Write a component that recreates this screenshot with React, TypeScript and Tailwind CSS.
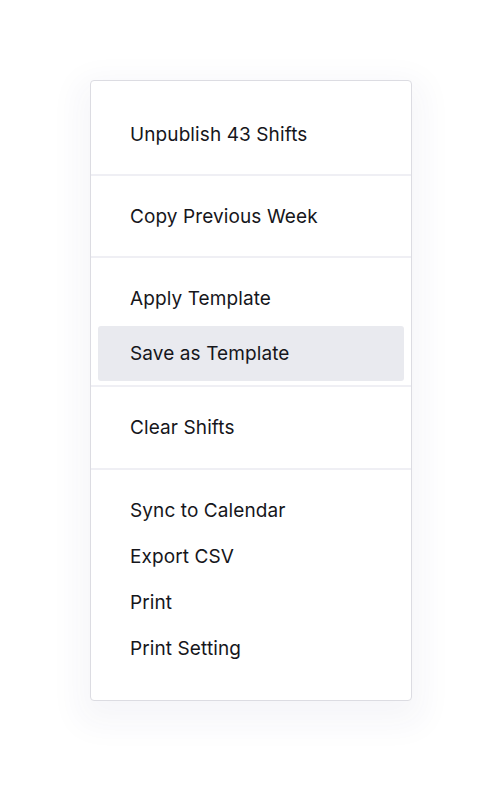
import React from "react";

function Item({ label, active }: { label: string; active?: boolean }) {
  return (
    <div
      className={
        "mx-[7px] flex items-center pl-[32px] rounded-[3px] " +
        (active ? "h-[55px] bg-[#e9eaef] mt-[5px] mb-[4px]" : "h-[46px]")
      }
    >
      <span className="text-[19px] leading-none text-[#16161b] tracking-[0.1px]">{label}</span>
    </div>
  );
}

function Divider() {
  return <div className="h-[2px] bg-[#efeff4]" />;
}

export default function App() {
  return (
    <div
      className="w-[502px] h-[802px] bg-white pt-[80px] pl-[90px]"
      style={{ fontFamily: "Inter, 'Noto Sans', sans-serif" }}
    >
      <div className="w-[322px] h-[621px] bg-white border border-[#dcdce2] rounded-[4px] shadow-[0_12px_32px_12px_rgba(50,50,110,0.045)] pt-[13px] flex flex-col">
        <div className="py-[17px]">
          <Item label="Unpublish 43 Shifts" />
        </div>
        <Divider />
        <div className="py-[17px]">
          <Item label="Copy Previous Week" />
        </div>
        <Divider />
        <div className="pt-[17px]">
          <Item label="Apply Template" />
          <Item label="Save as Template" active />
        </div>
        <Divider />
        <div className="pt-[17px] pb-[18px]">
          <Item label="Clear Shifts" />
        </div>
        <Divider />
        <div className="pt-[17px]">
          <Item label="Sync to Calendar" />
          <Item label="Export CSV" />
          <Item label="Print" />
          <Item label="Print Setting" />
        </div>
      </div>
    </div>
  );
}
